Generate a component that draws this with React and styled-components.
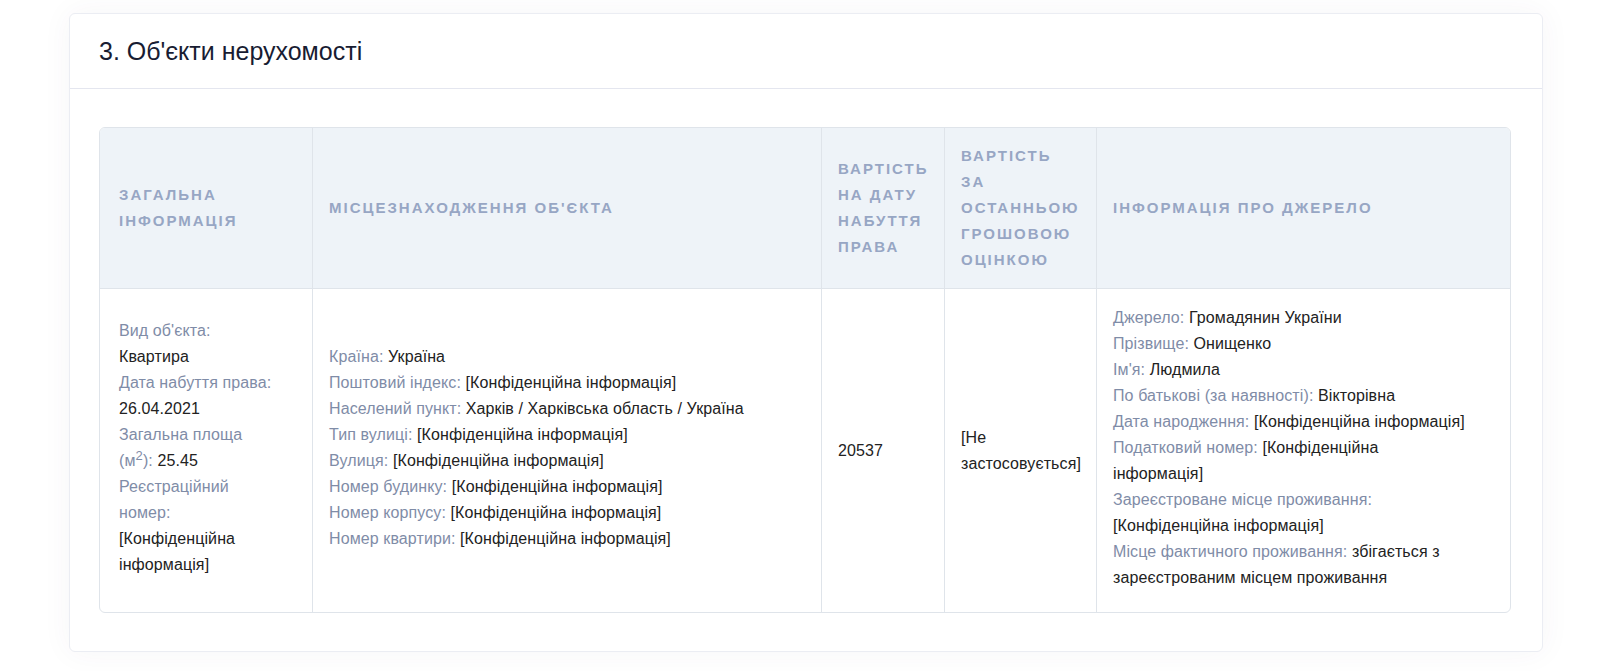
import React from 'react';
import styled, { createGlobalStyle } from 'styled-components';

const BORDER = '#dfe4ea';
const LABEL = '#7f8ca7';

const GlobalStyle = createGlobalStyle`
  body {
    margin: 0;
    background: #fff;
    font-family: "Liberation Sans", Arial, sans-serif;
  }
`;

const Page = styled.div`
  padding: 13px 0 20px 69px;
`;

const Card = styled.section`
  width: 1474px;
  box-sizing: border-box;
  background: #fff;
  border: 1px solid #ebedf3;
  border-radius: 6px;
  box-shadow: 0 0 30px rgba(82, 63, 105, 0.05);
`;

const CardHeader = styled.div`
  height: 74px;
  display: flex;
  align-items: center;
  padding: 0 29px;
  border-bottom: 1px solid #e4e6ef;
`;

const Title = styled.h3`
  margin: 0;
  font-size: 25px;
  font-weight: 400;
  color: #181c32;
`;

const CardBody = styled.div`
  padding: 38px 31px 38px 29px;
`;

const Table = styled.table`
  width: 100%;
  table-layout: fixed;
  border-collapse: separate;
  border-spacing: 0;
  border: 1px solid ${BORDER};
  border-radius: 6px;
  overflow: hidden;
`;

const Th = styled.th`
  padding: 15px 16px;
  background: #eef3f8;
  border-bottom: 1px solid ${BORDER};
  border-left: 1px solid ${BORDER};
  font-size: 15px;
  font-weight: 700;
  letter-spacing: 2px;
  line-height: 26px;
  text-transform: uppercase;
  text-align: left;
  vertical-align: middle;
  color: #97a6c4;

  &:first-child {
    border-left: none;
    padding-left: 19px;
  }
`;

const Td = styled.td`
  padding: 16px;
  border-left: 1px solid ${BORDER};
  font-size: 16px;
  line-height: 26px;
  letter-spacing: 0.1px;
  color: #222;
  vertical-align: middle;

  &:first-child {
    border-left: none;
    padding-left: 19px;
  }
`;

const List = styled.div`
  padding-bottom: 5px;
  max-width: ${props => (props.$max ? `${props.$max}px` : 'none')};
`;

const Label = styled.span`
  color: ${LABEL};
`;

const Line = styled.div``;

const Sup = styled.sup`
  font-size: 13px;
  line-height: 0;
`;

const Field = ({ label, children }) => (
  <Line>
    <Label>{label}:</Label> {children}
  </Line>
);

const CONFIDENTIAL = '[Конфіденційна інформація]';

const location = [
  ['Країна', 'Україна'],
  ['Поштовий індекс', CONFIDENTIAL],
  ['Населений пункт', 'Харків / Харківська область / Україна'],
  ['Тип вулиці', CONFIDENTIAL],
  ['Вулиця', CONFIDENTIAL],
  ['Номер будинку', CONFIDENTIAL],
  ['Номер корпусу', CONFIDENTIAL],
  ['Номер квартири', CONFIDENTIAL],
];

const source = [
  ['Джерело', 'Громадянин України'],
  ['Прізвище', 'Онищенко'],
  ["Ім'я", 'Людмила'],
  ['По батькові (за наявності)', 'Вікторівна'],
  ['Дата народження', CONFIDENTIAL],
  ['Податковий номер', CONFIDENTIAL],
  ['Зареєстроване місце проживання', CONFIDENTIAL],
  ['Місце фактичного проживання', 'збігається з зареєстрованим місцем проживання'],
];

export default function App() {
  return (
    <Page>
      <GlobalStyle />
      <Card>
        <CardHeader>
          <Title>3. Об'єкти нерухомості</Title>
        </CardHeader>
        <CardBody>
          <Table>
            <colgroup>
              <col style={{ width: 212 }} />
              <col style={{ width: 509 }} />
              <col style={{ width: 123 }} />
              <col style={{ width: 152 }} />
              <col />
            </colgroup>
            <thead>
              <tr>
                <Th>Загальна інформація</Th>
                <Th>Місцезнаходження об'єкта</Th>
                <Th>Вартість на дату набуття права</Th>
                <Th>Вартість за останньою грошовою оцінкою</Th>
                <Th>Інформація про джерело</Th>
              </tr>
            </thead>
            <tbody>
              <tr>
                <Td>
                  <List $max={160}>
                    <Field label="Вид об'єкта">Квартира</Field>
                    <Field label="Дата набуття права">26.04.2021</Field>
                    <Line>
                      <Label>
                        Загальна площа (м<Sup>2</Sup>):
                      </Label>{' '}
                      25.45
                    </Line>
                    <Field label="Реєстраційний номер">{CONFIDENTIAL}</Field>
                  </List>
                </Td>
                <Td>
                  <List>
                    {location.map(([label, value]) => (
                      <Field key={label} label={label}>
                        {value}
                      </Field>
                    ))}
                  </List>
                </Td>
                <Td>20537</Td>
                <Td>[Не застосовується]</Td>
                <Td>
                  <List $max={356}>
                    {source.map(([label, value]) => (
                      <Field key={label} label={label}>
                        {value}
                      </Field>
                    ))}
                  </List>
                </Td>
              </tr>
            </tbody>
          </Table>
        </CardBody>
      </Card>
    </Page>
  );
}
